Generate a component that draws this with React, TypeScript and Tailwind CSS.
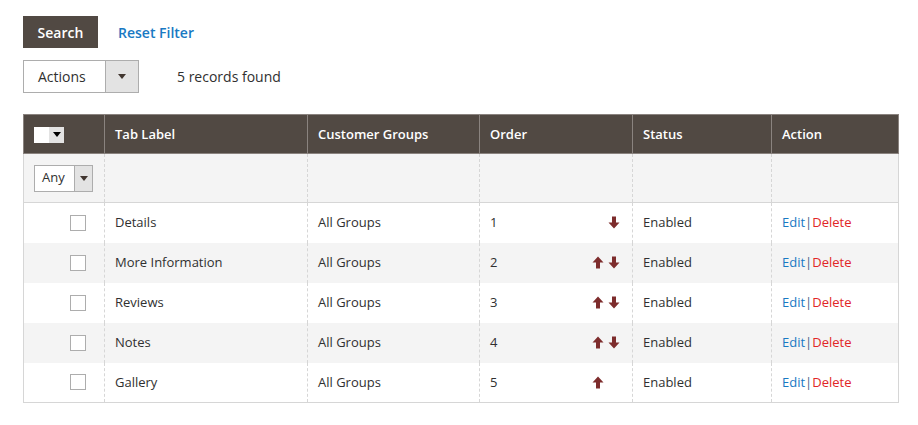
import React from "react";

const rows = [
  { label: "Details", order: 1, up: false, down: true },
  { label: "More Information", order: 2, up: true, down: true },
  { label: "Reviews", order: 3, up: true, down: true },
  { label: "Notes", order: 4, up: true, down: true },
  { label: "Gallery", order: 5, up: true, down: false },
];

function Arrow({ dir }: { dir: "up" | "down" }) {
  return (
    <svg width="12" height="13" viewBox="0 0 12 13" className={dir === "down" ? "rotate-180" : ""}>
      <path d="M6 0.5 L11.5 6.5 L8 6.5 L8 12.5 L4 12.5 L4 6.5 L0.5 6.5 Z" fill="#7d2c2c" />
    </svg>
  );
}

function Caret() {
  return (
    <svg width="8" height="5" viewBox="0 0 8 5">
      <path d="M0 0 L8 0 L4 5 Z" fill="#41362f" />
    </svg>
  );
}

export default function App() {
  const td = "h-[40px] border-l border-dashed border-[#d6d6d6] px-[10px] align-middle";
  return (
    <div className="min-h-[425px] bg-white pt-[16px] pl-[23px] text-[13px] text-[#303030]" style={{ fontFamily: '"Open Sans", sans-serif' }}>
      <div className="flex items-center">
        <button className="flex h-[32px] w-[75px] items-center justify-center bg-[#514943] text-[14px] font-semibold text-white">Search</button>
        <span className="ml-[20px] text-[14px] font-semibold text-[#1979c3]">Reset Filter</span>
      </div>
      <div className="mt-[12px] flex items-center">
        <div className="flex h-[33px] w-[116px] border border-[#adadad]">
          <div className="flex flex-1 items-center pl-[14px] text-[14px]">Actions</div>
          <div className="flex w-[33px] items-center justify-center border-l border-[#adadad] bg-[#e3e3e3]"><Caret /></div>
        </div>
        <span className="ml-[38px] text-[14px]">5 records found</span>
      </div>
      <table className="mt-[21px] w-[875px] table-fixed border-collapse border border-[#d6d6d6]">
        <colgroup>
          <col className="w-[81px]" />
          <col className="w-[203px]" />
          <col className="w-[172px]" />
          <col className="w-[153px]" />
          <col className="w-[139px]" />
          <col className="w-[127px]" />
        </colgroup>
        <thead>
          <tr className="h-[39px] bg-[#514943] text-left font-semibold text-white">
            <th className="border border-[#8a837f] px-[10px] pt-[1px] font-semibold">
              <div className="flex h-[16px] w-[30px]">
                <div className="w-[15px] bg-white"></div>
                <div className="flex flex-1 items-center justify-center bg-[#e3e3e3]"><svg width="8" height="5" viewBox="0 0 8 5"><path d="M0 0 L8 0 L4 5 Z" fill="#000" /></svg></div>
              </div>
            </th>
            {["Tab Label", "Customer Groups", "Order", "Status", "Action"].map((h) => (
              <th key={h} className="border border-[#8a837f] px-[10px] pt-[2px] font-semibold">{h}</th>
            ))}
          </tr>
        </thead>
        <tbody>
          <tr className="h-[49px] border-b border-[#d6d6d6] bg-[#f4f4f4]">
            <td className="px-[10px]">
              <div className="flex h-[27px] w-[59px] border border-[#adadad] bg-white">
                <div className="flex flex-1 items-center pl-[7px] text-[13px]">Any</div>
                <div className="flex w-[18px] items-center justify-center border-l border-[#adadad] bg-[#e3e3e3]"><Caret /></div>
              </div>
            </td>
            <td className="border-l border-dashed border-[#d6d6d6]"></td>
            <td className="border-l border-dashed border-[#d6d6d6]"></td>
            <td className="border-l border-dashed border-[#d6d6d6]"></td>
            <td className="border-l border-dashed border-[#d6d6d6]"></td>
            <td className="border-l border-dashed border-[#d6d6d6]"></td>
          </tr>
          {rows.map((r, i) => (
            <tr key={r.label} className={i % 2 === 1 ? "bg-[#f4f4f4]" : "bg-white"}>
              <td className="h-[40px] align-middle">
                <div className="ml-[46px] h-[16px] w-[16px] border border-[#adadad] bg-white"></div>
              </td>
              <td className={td}>{r.label}</td>
              <td className={td}>All Groups</td>
              <td className={td}>
                <div className="flex items-center justify-between">
                  <span>{r.order}</span>
                  <span className="mr-[2px] flex gap-[4px]">
                    {r.up ? <Arrow dir="up" /> : <span className="w-[12px]" />}
                    {r.down ? <Arrow dir="down" /> : <span className="w-[12px]" />}
                  </span>
                </div>
              </td>
              <td className={td}>Enabled</td>
              <td className={td}>
                <span className="text-[#1979c3]">Edit</span>
                <span className="text-[#41618a]">|</span>
                <span className="text-[#e22626]">Delete</span>
              </td>
            </tr>
          ))}
        </tbody>
      </table>
    </div>
  );
}
